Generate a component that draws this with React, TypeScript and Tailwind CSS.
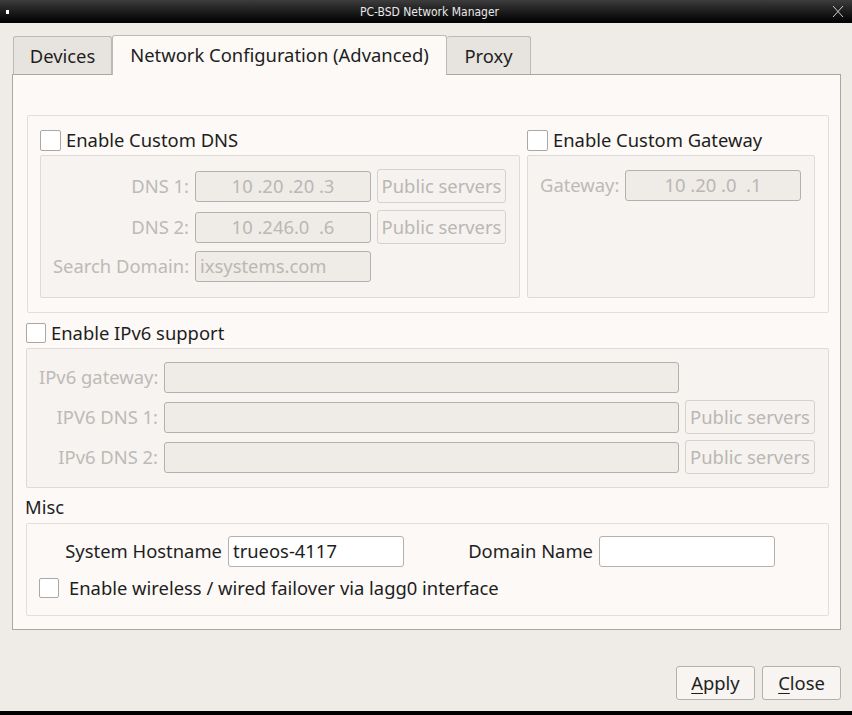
import React from "react";

const font = { fontFamily: '"Noto Sans", "Open Sans", sans-serif' };

function Check({ className = "" }: { className?: string }) {
  return (
    <span
      className={
        "inline-block w-[21px] h-[21px] shrink-0 bg-white border border-[#aaa7a4] rounded-[2px] " + className
      }
    />
  );
}

function Field({ value = "", center = false, w = "w-[176px]" }: { value?: string; center?: boolean; w?: string }) {
  return (
    <div
      className={
        "h-[31px] shrink-0 flex items-center bg-[#efebe7] border border-[#b3b0ad] rounded-[3px] text-[#bab7b4] leading-none whitespace-pre " +
        w +
        (center ? " justify-center" : " pl-[4px]")
      }
    >
      {value}
    </div>
  );
}

function PubBtn({ w = "w-[130px]" }: { w?: string }) {
  return (
    <div
      className={
        "h-[34px] shrink-0 flex items-center justify-center bg-[#f5f2ef] border border-[#d4d1ce] rounded-[3px] text-[#bab7b4] leading-none whitespace-nowrap " +
        w
      }
    >
      Public servers
    </div>
  );
}

function DisLabel({ text, w }: { text: string; w: string }) {
  return <span className={"shrink-0 text-right text-[#bdbab7] leading-none whitespace-nowrap " + w}>{text}</span>;
}

export default function App() {
  return (
    <div
      className="w-[852px] h-[715px] bg-[#efebe7] flex flex-col overflow-hidden text-[18.4px] text-[#1e1e1e]"
      style={font}
    >
      {/* title bar */}
      <div className="h-[23px] shrink-0 bg-linear-to-b from-[#3d3d3d] to-[#030303] flex items-center px-[6px]">
        <span className="w-[3px] h-[4px] bg-white" />
        <span
          className="flex-1 text-center text-[12px] text-[#e8e8e8] leading-none pl-[18px] whitespace-nowrap"
          style={{ fontFamily: '"DejaVu Sans Condensed", "DejaVu Sans", sans-serif', fontStretch: "condensed" }}
        >
          PC-BSD Network Manager
        </span>
        <svg width="12" height="13" viewBox="0 0 12 13" className="mr-[2px]">
          <path d="M1 1 L11 12 M11 1 L1 12" stroke="#cfcfcf" strokeWidth="1" fill="none" />
        </svg>
      </div>

      <div className="flex-1 flex flex-col pl-[12px] pr-[11px] pt-[11px]">
        {/* tabs */}
        <div className="flex items-end pl-[1px] h-[40px] relative z-10">
          <div className="w-[99px] h-[38px] flex items-center justify-center bg-[#e7e4e0] border border-b-0 border-[#bcb9b6] rounded-t-[3px] leading-none whitespace-nowrap pt-[1px]">
            Devices
          </div>
          <div className="w-[335px] h-[40px] flex items-center justify-center bg-[#fcf9f6] border border-b-0 border-[#bcb9b6] rounded-t-[3px] leading-none whitespace-nowrap -mb-[1px] pb-[1px]">
            Network Configuration (Advanced)
          </div>
          <div className="w-[84px] h-[38px] flex items-center justify-center bg-[#e7e4e0] border border-b-0 border-l-0 border-[#bcb9b6] rounded-t-[3px] leading-none pt-[1px]">
            Proxy
          </div>
        </div>

        {/* panel */}
        <div className="h-[556px] bg-[#fcf9f6] border border-[#a9a6a3] flex flex-col pl-[13px] pr-[11px] pt-[40px]">
          {/* DNS + gateway group */}
          <div className="ml-[1px] h-[198px] border border-[#e3dfdb] rounded-[2px] flex gap-[7px] pl-[12px] pr-[13px] pt-[14px]">
            <div className="w-[480px] flex flex-col">
              <div className="flex items-center gap-[5px] h-[21px]">
                <Check />
                <span className="leading-none whitespace-nowrap">Enable Custom DNS</span>
              </div>
              <div className="mt-[4px] h-[143px] bg-[#f6f3f0] border border-[#dedad6] rounded-[2px] flex flex-col gap-[7px] pt-[13px] pl-[12px]">
                <div className="flex items-center gap-[6px]">
                  <DisLabel text="DNS 1:" w="w-[136px]" />
                  <Field value="10 .20 .20 .3" center />
                  <PubBtn w="w-[129px]" />
                </div>
                <div className="flex items-center gap-[6px]">
                  <DisLabel text="DNS 2:" w="w-[136px]" />
                  <Field value="10 .246.0  .6" center />
                  <PubBtn w="w-[129px]" />
                </div>
                <div className="flex items-center gap-[6px]">
                  <DisLabel text="Search Domain:" w="w-[136px]" />
                  <Field value="ixsystems.com" />
                </div>
              </div>
            </div>
            <div className="w-[288px] flex flex-col">
              <div className="flex items-center gap-[5px] h-[21px]">
                <Check />
                <span className="leading-none whitespace-nowrap">Enable Custom Gateway</span>
              </div>
              <div className="mt-[4px] h-[143px] bg-[#f6f3f0] border border-[#dedad6] rounded-[2px] flex flex-col pt-[14px] pl-[12px]">
                <div className="flex items-center gap-[7px]">
                  <DisLabel text="Gateway:" w="w-[78px]" />
                  <Field value="10 .20 .0  .1" center />
                </div>
              </div>
            </div>
          </div>

          {/* IPv6 */}
          <div className="mt-[10px] flex items-center gap-[5px] h-[20px]">
            <Check className="!w-[20px] !h-[20px]" />
            <span className="leading-none whitespace-nowrap">Enable IPv6 support</span>
          </div>
          <div className="mt-[5px] h-[140px] bg-[#f6f3f0] border border-[#dedad6] rounded-[2px] flex flex-col pt-[13px] pl-[12px]">
            <div className="flex items-center gap-[6px]">
              <DisLabel text="IPv6 gateway:" w="w-[119px]" />
              <Field w="w-[515px]" />
            </div>
            <div className="flex items-center gap-[6px] mt-[7px]">
              <DisLabel text="IPV6 DNS 1:" w="w-[119px]" />
              <Field w="w-[515px]" />
              <PubBtn />
            </div>
            <div className="flex items-center gap-[6px] mt-[6px]">
              <DisLabel text="IPv6 DNS 2:" w="w-[119px]" />
              <Field w="w-[515px]" />
              <PubBtn />
            </div>
          </div>

          {/* Misc */}
          <div className="mt-[9px] h-[21px] -ml-[1px] flex items-center leading-none">Misc</div>
          <div className="mt-[5px] h-[93px] border border-[#e3dfdb] rounded-[2px] flex flex-col pt-[12px] pl-[12px]">
            <div className="flex items-center gap-[6px]">
              <span className="w-[183px] text-right leading-none shrink-0 whitespace-nowrap">System Hostname</span>
              <div className="w-[176px] h-[31px] bg-white border border-[#b3b0ad] rounded-[3px] flex items-center pl-[4px] leading-none">
                trueos-4117
              </div>
              <span className="w-[183px] text-right leading-none shrink-0 whitespace-nowrap">Domain Name</span>
              <div className="w-[176px] h-[31px] bg-white border border-[#b3b0ad] rounded-[3px]" />
            </div>
            <div className="mt-[11px] flex items-center gap-[10px]">
              <Check className="!w-[20px] !h-[20px]" />
              <span className="leading-none whitespace-nowrap">Enable wireless / wired failover via lagg0 interface</span>
            </div>
          </div>
        </div>

        {/* bottom buttons */}
        <div className="flex justify-end gap-[7px] mt-[36px]">
          <div className="w-[79px] h-[34px] flex items-center justify-center bg-[#f7f4f1] border border-[#b3b0ad] rounded-[3px] leading-none pt-[1px]">
            <span>
              <span className="underline underline-offset-[3px]">A</span>pply
            </span>
          </div>
          <div className="w-[79px] h-[34px] flex items-center justify-center bg-[#f7f4f1] border border-[#b3b0ad] rounded-[3px] leading-none pt-[1px]">
            <span>
              <span className="underline underline-offset-[3px]">C</span>lose
            </span>
          </div>
        </div>
      </div>
      <div className="h-[4px] shrink-0 bg-black" />
    </div>
  );
}
